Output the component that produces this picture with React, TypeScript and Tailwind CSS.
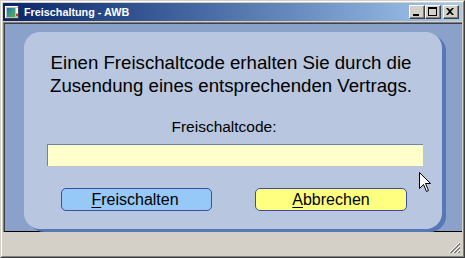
import React from "react";

function TitleIcon() {
  return (
    <svg width="16" height="16" viewBox="0 0 16 16" className="shrink-0">
      <defs>
        <linearGradient id="ig" x1="0" y1="0" x2="1" y2="1">
          <stop offset="0" stopColor="#2a6ab0" />
          <stop offset="0.5" stopColor="#3a9a8a" />
          <stop offset="1" stopColor="#50b040" />
        </linearGradient>
      </defs>
      <rect x="1" y="2" width="14" height="13" fill="#c0c0c0" />
      <rect x="1" y="2" width="14" height="1" fill="#ffffff" />
      <rect x="1" y="2" width="1" height="13" fill="#ffffff" />
      <rect x="14" y="2" width="1" height="13" fill="#404040" />
      <rect x="1" y="14" width="14" height="1" fill="#404040" />
      <rect x="3" y="4" width="8" height="9" fill="url(#ig)" />
      <rect x="12" y="4" width="2" height="5" fill="#ffffff" />
      <rect x="12" y="10" width="2" height="2" fill="#e03030" />
    </svg>
  );
}

function CapButton({ children }: { children: React.ReactNode }) {
  return (
    <div className="w-[16px] h-[14px] bg-[#d4d0c8] border border-t-white border-l-white border-b-[#404040] border-r-[#404040]">
      <div className="w-full h-full border-r border-b border-r-[#808080] border-b-[#808080] flex items-center justify-center">
        {children}
      </div>
    </div>
  );
}

export default function App() {
  return (
    <div
      className="w-[465px] h-[258px] relative overflow-hidden bg-[#d4d0c8] border border-t-[#d4d0c8] border-l-[#d4d0c8] border-b-[#404040] border-r-[#404040]"
      style={{ fontFamily: '"Liberation Sans", Arial, sans-serif' }}
    >
      <div className="h-full border border-t-white border-l-white border-b-[#808080] border-r-[#808080] p-px flex flex-col">
        {/* Title bar */}
        <div className="h-[18px] shrink-0 flex items-center bg-linear-to-r from-[#0a246a] to-[#a6caf0] pl-px pr-[3px]">
          <TitleIcon />
          <span className="ml-[4px] text-white font-bold text-[10.8px] leading-none">
            Freischaltung - AWB
          </span>
          <div className="ml-auto flex items-center">
            <CapButton>
              <div className="w-[6px] h-[2px] bg-black mt-[6px] -ml-px" />
            </CapButton>
            <CapButton>
              <div className="w-[9px] h-[9px] border border-black border-t-2 -ml-px" />
            </CapButton>
            <div className="w-[2px]" />
            <CapButton>
              <svg width="8" height="7" viewBox="0 0 8 7" className="-ml-px">
                <path d="M0 0h2l2 2 2-2h2L5 3.5 8 7H6L4 5 2 7H0l3-3.5z" fill="#000" />
              </svg>
            </CapButton>
          </div>
        </div>
        <div className="h-px shrink-0" />
        {/* Client area */}
        <div className="h-[210px] shrink-0 border-t border-l border-t-[#808080] border-l-[#808080]">
          <div className="h-full border-t border-l border-t-[#404040] border-l-[#404040] border-b border-b-black bg-[#8aa2ca] flex flex-col">
            <div className="ml-[19px] mt-[8px] w-[418px] h-[197px] rounded-[16px] bg-[#b8c7df] shadow-[4px_3px_0_#5877b6] flex flex-col">
              <div className="mt-[19px] text-[18.67px] leading-[23px] text-black text-center pr-[4px]">
                Einen Freischaltcode erhalten Sie durch die
                <br />
                Zusendung eines entsprechenden Vertrags.
              </div>
              <div className="mt-[21px] text-[15.5px] leading-[18px] text-black text-center pr-[18px]">
                Freischaltcode:
              </div>
              <div className="mt-[8px] ml-[23px] w-[376px] h-[22px] bg-[#ffffcc] border-t border-l border-t-[#6c84b0] border-l-[#6c84b0]" />
              <div className="mt-[22px] flex pl-[37px] gap-[43px]">
                <div className="w-[151px] h-[23px] rounded-[5px] bg-[#96c8f8] border border-[#3d4da0] flex items-center justify-center text-[16px] leading-[18px] text-black">
                  <span className="-ml-[3px]">
                    <span className="underline underline-offset-2">F</span>reischalten
                  </span>
                </div>
                <div className="w-[152px] h-[23px] rounded-[5px] bg-[#ffff80] border border-[#3d4da0] flex items-center justify-center text-[16px] leading-[18px] text-black">
                  <span>
                    <span className="underline underline-offset-2">A</span>bbrechen
                  </span>
                </div>
              </div>
            </div>
          </div>
        </div>
        {/* Status bar */}
        <div className="flex-1 relative bg-[#d4d0c8]">
          <svg width="12" height="12" viewBox="0 0 12 12" className="absolute right-[1px] bottom-[1px]">
            <path d="M11 1L1 11M11 2L2 11" stroke="#808080" strokeWidth="1" />
            <path d="M11 5L5 11M11 6L6 11" stroke="#808080" strokeWidth="1" />
            <path d="M11 9L9 11M11 10L10 11" stroke="#808080" strokeWidth="1" />
            <path d="M11 0L0 11M11 4L4 11M11 8L8 11" stroke="#ffffff" strokeWidth="1" />
          </svg>
        </div>
      </div>
      {/* Mouse cursor */}
      <svg width="13" height="22" viewBox="0 0 13 22" className="absolute left-[418px] top-[171px]">
        <path
          d="M0.5 0.5V16.5L4.5 12.5L7.5 19.5L9.5 18.5L6.5 11.5H11.5Z"
          fill="#ffffff"
          stroke="#000000"
          strokeWidth="1"
          strokeLinejoin="miter"
        />
      </svg>
    </div>
  );
}
